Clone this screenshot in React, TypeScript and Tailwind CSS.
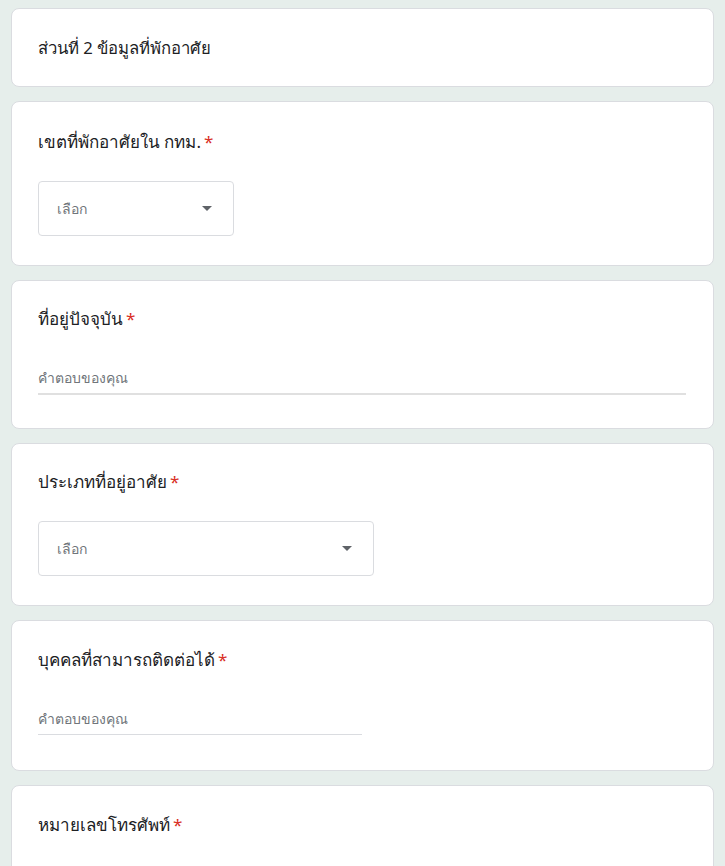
import { ReactNode } from "react"

const font = "font-['Tahoma','Noto_Sans','DejaVu_Sans',sans-serif]"

function Card({ children, className = "" }: { children: ReactNode; className?: string }) {
  return (
    <div className={`rounded-lg border border-[#dadce0] bg-white px-[26px] ${className}`}>
      {children}
    </div>
  )
}

function Title({ text }: { text: string }) {
  return (
    <div className="flex items-center text-[17px] leading-6 text-[#202124]">
      <span>{text}</span>
      <span className="ml-[3px] text-[#d93025]">*</span>
    </div>
  )
}

function Dropdown({ width }: { width: string }) {
  return (
    <div className={`mt-[27px] flex h-[55px] items-center justify-between rounded border border-[#dadce0] pl-[18px] pr-[21px] ${width}`}>
      <span className="text-sm text-[#70757a]">เลือก</span>
      <svg width="10" height="5" viewBox="0 0 10 5">
        <path d="M0 0h10L5 5z" fill="#5f6368" />
      </svg>
    </div>
  )
}

function ShortAnswer({ width, thick }: { width: string; thick?: boolean }) {
  return (
    <div className={`mt-[37px] ${width}`}>
      <div className="pb-[5px] text-sm leading-5 text-[#70757a]">คำตอบของคุณ</div>
      <div className={thick ? "h-[2px] bg-[#e0e0e0]" : "h-px bg-[#dadce0]"} />
    </div>
  )
}

export default function App() {
  return (
    <div className={`min-h-[866px] bg-[#e6eeeb] px-[11px] pt-[8px] pb-6 ${font}`}>
      <div className="flex flex-col gap-[14px]">
        <Card className="flex h-[79px] items-center">
          <span className="text-[16.7px] text-[#202124]">ส่วนที่ 2 ข้อมูลที่พักอาศัย</span>
        </Card>

        <Card className="h-[165px] pt-[28px]">
          <Title text="เขตที่พักอาศัยใน กทม." />
          <Dropdown width="w-[196px]" />
        </Card>

        <Card className="h-[149px] pt-[26px]">
          <Title text="ที่อยู่ปัจจุบัน" />
          <ShortAnswer width="w-[648px]" thick />
        </Card>

        <Card className="h-[163px] pt-[26px]">
          <Title text="ประเภทที่อยู่อาศัย" />
          <Dropdown width="w-[336px]" />
        </Card>

        <Card className="h-[151px] pt-[27px]">
          <Title text="บุคคลที่สามารถติดต่อได้" />
          <ShortAnswer width="w-[324px]" />
        </Card>

        <Card className="h-[150px] pt-[27px]">
          <Title text="หมายเลขโทรศัพท์" />
        </Card>
      </div>
    </div>
  )
}
